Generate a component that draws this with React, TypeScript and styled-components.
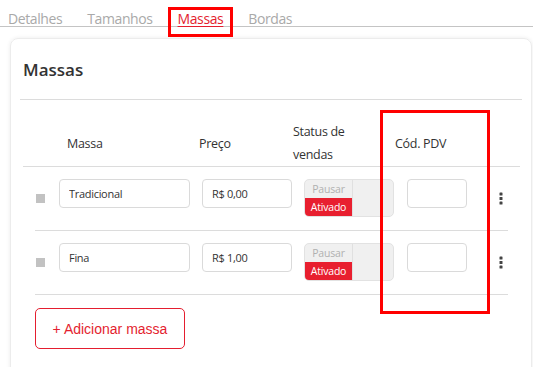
import React from "react";
import styled, { createGlobalStyle } from "styled-components";

const GlobalStyle = createGlobalStyle`
  html, body { margin: 0; padding: 0; background: #fff; }
  body { font-family: "Open Sans", "Noto Sans", sans-serif; color: #333; }
  * { box-sizing: border-box; }
`;

const Page = styled.div`
  width: 533px;
  height: 367px;
  overflow: hidden;
`;

const TabBar = styled.div`
  display: flex;
  align-items: flex-end;
  gap: 25px;
  height: 27px;
  padding-left: 8px;
  border-bottom: 1px solid #c4c4c4;
`;

const Tab = styled.div<{ $active?: boolean }>`
  position: relative;
  font-size: 14px;
  line-height: 14px;
  letter-spacing: -0.4px;
  color: ${(p) => (p.$active ? "#e41e2f" : "#a9a9a9")};
  text-decoration: ${(p) => (p.$active ? "underline" : "none")};
  text-underline-offset: 2px;
`;

const Highlight = styled.div<{ $l: number; $t: number; $w: number; $h: number }>`
  position: absolute;
  left: ${(p) => p.$l}px;
  top: ${(p) => p.$t}px;
  width: ${(p) => p.$w}px;
  height: ${(p) => p.$h}px;
  border: 3px solid #ff0000;
  pointer-events: none;
`;

const Card = styled.div`
  margin: 11px 1px 0 10px;
  height: 340px;
  border: 1px solid #ececec;
  border-radius: 8px;
  box-shadow: 0 0 4px rgba(0, 0, 0, 0.08);
  padding: 19px 9px 17px;
`;

const Heading = styled.h2`
  margin: 0 0 17px 3px;
  font-size: 17px;
  line-height: 24px;
  font-weight: 600;
  color: #333;
`;

const Rule = styled.hr`
  margin: 0;
  border: none;
  border-top: 1px solid #dcdcdc;
`;

const TableWrap = styled.div`
  position: relative;
`;

const HeadRow = styled.div`
  display: grid;
  grid-template-columns: 44px 132px 94px 102px 1fr;
  align-items: center;
  margin: 0 2px 0 3px;
  padding-top: 20px;
  border-bottom: 1px solid #dcdcdc;
`;

const HeadCell = styled.div<{ $narrow?: boolean }>`
  font-size: 12.5px;
  line-height: 23px;
  letter-spacing: -0.3px;
  color: #333;
  max-width: ${(p) => (p.$narrow ? "70px" : "none")};
`;

const Row = styled.div`
  display: grid;
  grid-template-columns: 24px 143px 102px 103px 86px 1fr;
  align-items: start;
  margin: 0 14px 0 15px;
  padding: 12px 0 13px;
  border-bottom: 1px solid #dcdcdc;
`;

const Handle = styled.div`
  align-self: center;
  width: 9px;
  height: 9px;
  margin-left: 1px;
  background: #c2c2c2;
`;

const Field = styled.input<{ $w: number }>`
  width: ${(p) => p.$w}px;
  height: 29px;
  border: 1px solid #dadada;
  border-radius: 4px;
  padding: 0 9px;
  font-family: "Open Sans", "Noto Sans", sans-serif;
  font-size: 11px;
  letter-spacing: -0.3px;
  color: #333;
  background: #fff;
  outline: none;
`;

const Status = styled.div`
  display: flex;
  width: 90px;
  height: 38px;
  border: 1px solid #e2e2e2;
  border-radius: 5px;
  background: #f0f0f0;
  overflow: hidden;
`;

const StatusCol = styled.div`
  display: flex;
  flex-direction: column;
  width: 48px;
  border-right: 1px solid #e0e0e0;
`;

const StatusOpt = styled.div<{ $on?: boolean }>`
  flex: 1;
  display: flex;
  align-items: center;
  justify-content: center;
  font-size: 10.5px;
  letter-spacing: -0.2px;
  color: ${(p) => (p.$on ? "#fff" : "#b0b0b0")};
  background: ${(p) => (p.$on ? "#e81f2f" : "transparent")};
`;

const Kebab = styled.div`
  align-self: center;
  display: flex;
  justify-content: center;
`;

const AddButton = styled.button`
  margin: 13px 0 0 15px;
  width: 150px;
  height: 41px;
  border: 1px solid #e41e2f;
  border-radius: 5px;
  background: #fff;
  color: #e41e2f;
  font-family: "Liberation Sans", Arial, sans-serif;
  font-size: 14px;
  cursor: pointer;
`;

const Dots = () => (
  <svg width="4" height="13" viewBox="0 0 4 13">
    <rect x="0.5" y="0.5" width="3" height="3" rx="0.6" fill="#444" />
    <rect x="0.5" y="5" width="3" height="3" rx="0.6" fill="#444" />
    <rect x="0.5" y="9.5" width="3" height="3" rx="0.6" fill="#444" />
  </svg>
);

const rows = [
  { name: "Tradicional", price: "R$ 0,00" },
  { name: "Fina", price: "R$ 1,00" },
];

export default function App() {
  return (
    <Page>
      <GlobalStyle />
      <TabBar>
        <Tab>Detalhes</Tab>
        <Tab>Tamanhos</Tab>
        <Tab $active>
          Massas
          <Highlight $l={-10} $t={-5} $w={65} $h={30} />
        </Tab>
        <Tab>Bordas</Tab>
      </TabBar>
      <Card>
        <Heading>Massas</Heading>
        <Rule />
        <TableWrap>
          <HeadRow>
            <span />
            <HeadCell>Massa</HeadCell>
            <HeadCell>Preço</HeadCell>
            <HeadCell $narrow>Status de vendas</HeadCell>
            <HeadCell>Cód. PDV</HeadCell>
          </HeadRow>
          {rows.map((r) => (
            <Row key={r.name}>
              <Handle />
              <Field $w={131} defaultValue={r.name} />
              <Field $w={90} defaultValue={r.price} />
              <Status>
                <StatusCol>
                  <StatusOpt>Pausar</StatusOpt>
                  <StatusOpt $on>Ativado</StatusOpt>
                </StatusCol>
              </Status>
              <Field $w={60} defaultValue="" />
              <Kebab>
                <Dots />
              </Kebab>
            </Row>
          ))}
          <Highlight $l={360} $t={10} $w={110} $h={204} />
        </TableWrap>
        <AddButton>+ Adicionar massa</AddButton>
      </Card>
    </Page>
  );
}
